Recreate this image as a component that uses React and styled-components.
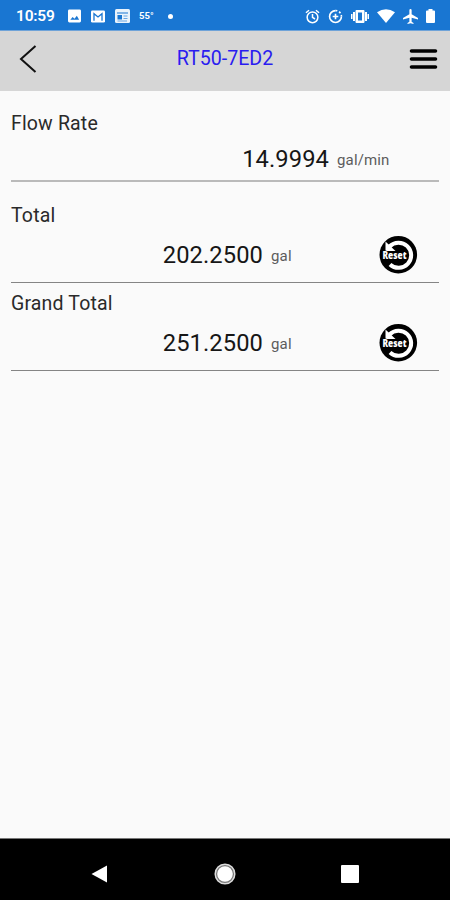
import React from "react";
import styled, { createGlobalStyle } from "styled-components";

const GlobalStyle = createGlobalStyle`
  * { box-sizing: border-box; }
  body { margin: 0; font-family: Roboto, sans-serif; background: #fafafa; }
`;

const Screen = styled.div`
  display: flex;
  flex-direction: column;
  width: 450px;
  height: 900px;
  background: #fafafa;
  overflow: hidden;
`;

const StatusBar = styled.div`
  display: flex;
  align-items: center;
  flex: none;
  height: 31px;
  padding: 2px 15px 0 16px;
  background: #1976d2;
  border-bottom: 1px solid #6fa3d8;
  color: #fff;
`;

const Clock = styled.span`
  width: 52px;
  font-size: 15.5px;
  font-weight: 600;
  line-height: 20px;
  letter-spacing: -0.2px;
`;

const StatusIcons = styled.div`
  display: flex;
  align-items: center;
  gap: ${(p) => p.$gap}px;
  margin-left: ${(p) => (p.$end ? "auto" : "0")};
  svg { display: block; }
`;

const Temperature = styled.span`
  width: 17px;
  margin-left: -1px;
  font-size: 9.5px;
  font-weight: 700;
  line-height: 12px;
`;

const Dot = styled.span`
  width: 5px;
  height: 5px;
  margin-left: 2px;
  border-radius: 50%;
  background: #fff;
`;

const Header = styled.header`
  display: grid;
  grid-template-columns: 60px 1fr 60px;
  align-items: center;
  flex: none;
  height: 60px;
  padding-bottom: 5px;
  background: #d6d6d6;
`;

const Title = styled.h1`
  margin: 0;
  text-align: center;
  font-size: 19.6px;
  font-weight: 400;
  line-height: 24px;
  color: #2a1cf0;
`;

const IconButton = styled.button`
  display: flex;
  justify-content: ${(p) => (p.$end ? "flex-end" : "flex-start")};
  padding: ${(p) => (p.$end ? "0 12px 0 0" : "0 0 0 18px")};
  border: 0;
  background: none;
  svg { display: block; }
`;

const Content = styled.main`
  flex: 1;
  padding: 0 11px;
`;

const Reading = styled.section`
  display: flex;
  flex-direction: column;
  height: ${(p) => p.$height}px;
  padding-top: ${(p) => p.$top}px;
  border-bottom: ${(p) => p.$rule};
`;

const Label = styled.div`
  font-size: 19.5px;
  line-height: 24px;
  letter-spacing: 0.16px;
  color: #2a2a2a;
`;

const ValueRow = styled.div`
  display: grid;
  grid-template-columns: ${(p) => p.$valueEnd}px 1fr 40px;
  align-items: center;
  height: 40px;
  margin-top: ${(p) => p.$gap}px;
  padding-right: 21px;
`;

const Value = styled.span`
  text-align: right;
  font-size: 23.7px;
  line-height: 30px;
  letter-spacing: 0.1px;
  color: #161616;
`;

const Unit = styled.span`
  padding: 1px 0 0 8px;
  font-size: 15px;
  line-height: 20px;
  letter-spacing: 0.15px;
  color: #5c5c5c;
  white-space: nowrap;
`;

const ResetButton = styled.button`
  width: 40px;
  height: 40px;
  padding: 0;
  border: 0;
  background: none;
  svg { display: block; }
`;

const NavBar = styled.nav`
  display: flex;
  align-items: center;
  justify-content: space-between;
  flex: none;
  height: 62px;
  padding: 8px 91px 0 90px;
  background: #000;
  border-top: 1px solid #777;
`;

function ResetIcon() {
  return (
    <svg width="40" height="40" viewBox="0 0 40 40">
      <circle cx="20.3" cy="19.7" r="18.8" fill="#000" />
      <path d="M11.500 11.500 A12.600 12.600 0 1 1 12 29.500" fill="none" stroke="#fff" strokeWidth="4" />
      <path d="M7.500 6.500V16H17.500Z" fill="#fff" />
      <text
        x="4.500"
        y="23.800"
        fontFamily="Open Sans, sans-serif"
        fontSize="9.600"
        fontWeight="800"
        textLength="24"
        lengthAdjust="spacingAndGlyphs"
        fill="#fff"
        stroke="#000"
        strokeWidth="1.200"
        paintOrder="stroke"
      >
        Reset
      </text>
    </svg>
  );
}

function Measurement({ label, value, unit, height, top, gap, valueEnd, rule, reset }) {
  return (
    <Reading $height={height} $top={top} $rule={rule}>
      <Label>{label}</Label>
      <ValueRow $gap={gap} $valueEnd={valueEnd}>
        <Value>{value}</Value>
        <Unit>{unit}</Unit>
        {reset && <ResetButton aria-label="Reset"><ResetIcon /></ResetButton>}
      </ValueRow>
    </Reading>
  );
}

export default function App() {
  return (
    <Screen>
      <GlobalStyle />
      <StatusBar>
        <Clock>10:59</Clock>
        <StatusIcons $gap={10}>
          <svg width="13" height="14" viewBox="0 0 14 14">
            <rect width="14" height="14" rx="1.5" fill="#fff" />
            <path d="M2.5 11 5 8l2 2 2.5-3.2L12 11Z" fill="#1976d2" />
          </svg>
          <svg width="14" height="13" viewBox="0 0 15 13">
            <rect width="15" height="13" rx="1.5" fill="#fff" />
            <path d="M3.2 11V3.5L7.5 7l4.3-3.5V11" fill="none" stroke="#1976d2" strokeWidth="1.4" />
          </svg>
          <svg width="15" height="14" viewBox="0 0 15 14">
            <rect width="15" height="14" rx="1.5" fill="#eaf3fc" />
            <path d="M2 4H13" stroke="#1976d2" strokeWidth="1" />
            <rect x="2.5" y="6" width="4.5" height="4.5" fill="#1976d2" />
            <path d="M8.5 7H12.5M8.5 9.5H12.5M2.5 12H12" stroke="#6aa6e2" />
          </svg>
          <Temperature>55°</Temperature>
          <Dot />
        </StatusIcons>
        <StatusIcons $gap={8} $end>
          <svg width="15" height="15" viewBox="0 0 24 24" fill="none" stroke="#fff" strokeWidth="2.4">
            <circle cx="12" cy="13.3" r="8.6" />
            <path d="M12 8v5.5l4 2.5M1.5 6 6.5 2M22.5 6l-5-4" />
          </svg>
          <svg width="15" height="15" viewBox="0 0 24 24" fill="none" stroke="#fff" strokeWidth="2.6">
            <path d="M12 2.5a9.5 9.5 0 1 0 9.5 9.5" />
            <path d="M12 2.5a9.5 9.5 0 0 1 9.5 9.5" strokeDasharray="3 3" />
            <path d="M12 7.5v9M7.5 12h9" />
          </svg>
          <svg width="18" height="15" viewBox="0 0 18 15" fill="#fff">
            <path d="M5.5 1h7a1 1 0 0 1 1 1v11a1 1 0 0 1-1 1h-7a1 1 0 0 1-1-1V2a1 1 0 0 1 1-1Zm1.500 2.500v8h4v-8Z" fillRule="evenodd" />
            <path d="M2 3h2v9H2ZM0 5h1.500v5H0ZM14 3h2v9h-2ZM16.500 5H18v5h-1.500Z" />
          </svg>
          <svg width="18" height="14" viewBox="0 0 18 14"><path d="M0 3.2Q9-2.8 18 3.2L9 14Z" fill="#fff" /></svg>
          <svg width="15" height="15" viewBox="2 2 20 20" fill="#fff">
            <path d="M22 16v-2l-8.500-5V3.500a1.500 1.500 0 0 0-3 0V9L2 14v2l8.500-2.500V19L8 20.500V22l4-1 4 1v-1.500L13.500 19v-5.500Z" />
          </svg>
          <svg width="9" height="14" viewBox="0 0 9 14"><path d="M2.500 0h4v1.500H8a1 1 0 0 1 1 1V13a1 1 0 0 1-1 1H1a1 1 0 0 1-1-1V2.500a1 1 0 0 1 1-1h1.500Z" fill="#fff" /></svg>
        </StatusIcons>
      </StatusBar>
      <Header>
        <IconButton aria-label="Back">
          <svg width="20" height="30" viewBox="0 0 20 30">
            <path d="M17.500 2 3 15 17.500 28" fill="none" stroke="#111" strokeWidth="2" />
          </svg>
        </IconButton>
        <Title>RT50-7ED2</Title>
        <IconButton $end aria-label="Menu">
          <svg width="29" height="22" viewBox="0 0 29 22">
            <path d="M2.500 3h24M2.500 11h24M2.500 19h24" stroke="#000" strokeWidth="3.600" strokeLinecap="round" />
          </svg>
        </IconButton>
      </Header>
      <Content>
        <Measurement label="Flow Rate" value="14.9994" unit="gal/min" height={91} top={21} gap={3} valueEnd={318} rule="2px solid #bababa" />
        <Measurement label="Total" value="202.2500" unit="gal" height={101} top={22} gap={7} valueEnd={252} rule="1px solid #858585" reset />
        <Measurement label="Grand Total" value="251.2500" unit="gal" height={88} top={9} gap={7} valueEnd={252} rule="1px solid #858585" reset />
      </Content>
      <NavBar>
        <svg width="18" height="20" viewBox="0 0 18 20"><path d="M1.500 10 17 1.500v17Z" fill="#fff" /></svg>
        <svg width="22" height="22" viewBox="0 0 22 22">
          <circle cx="11" cy="11" r="9.800" fill="#777" stroke="#ddd" strokeWidth="1.500" />
          <circle cx="11" cy="11" r="7.800" fill="#fff" />
        </svg>
        <svg width="18" height="18" viewBox="0 0 18 18"><rect width="18" height="18" rx="1" fill="#fff" /></svg>
      </NavBar>
    </Screen>
  );
}
